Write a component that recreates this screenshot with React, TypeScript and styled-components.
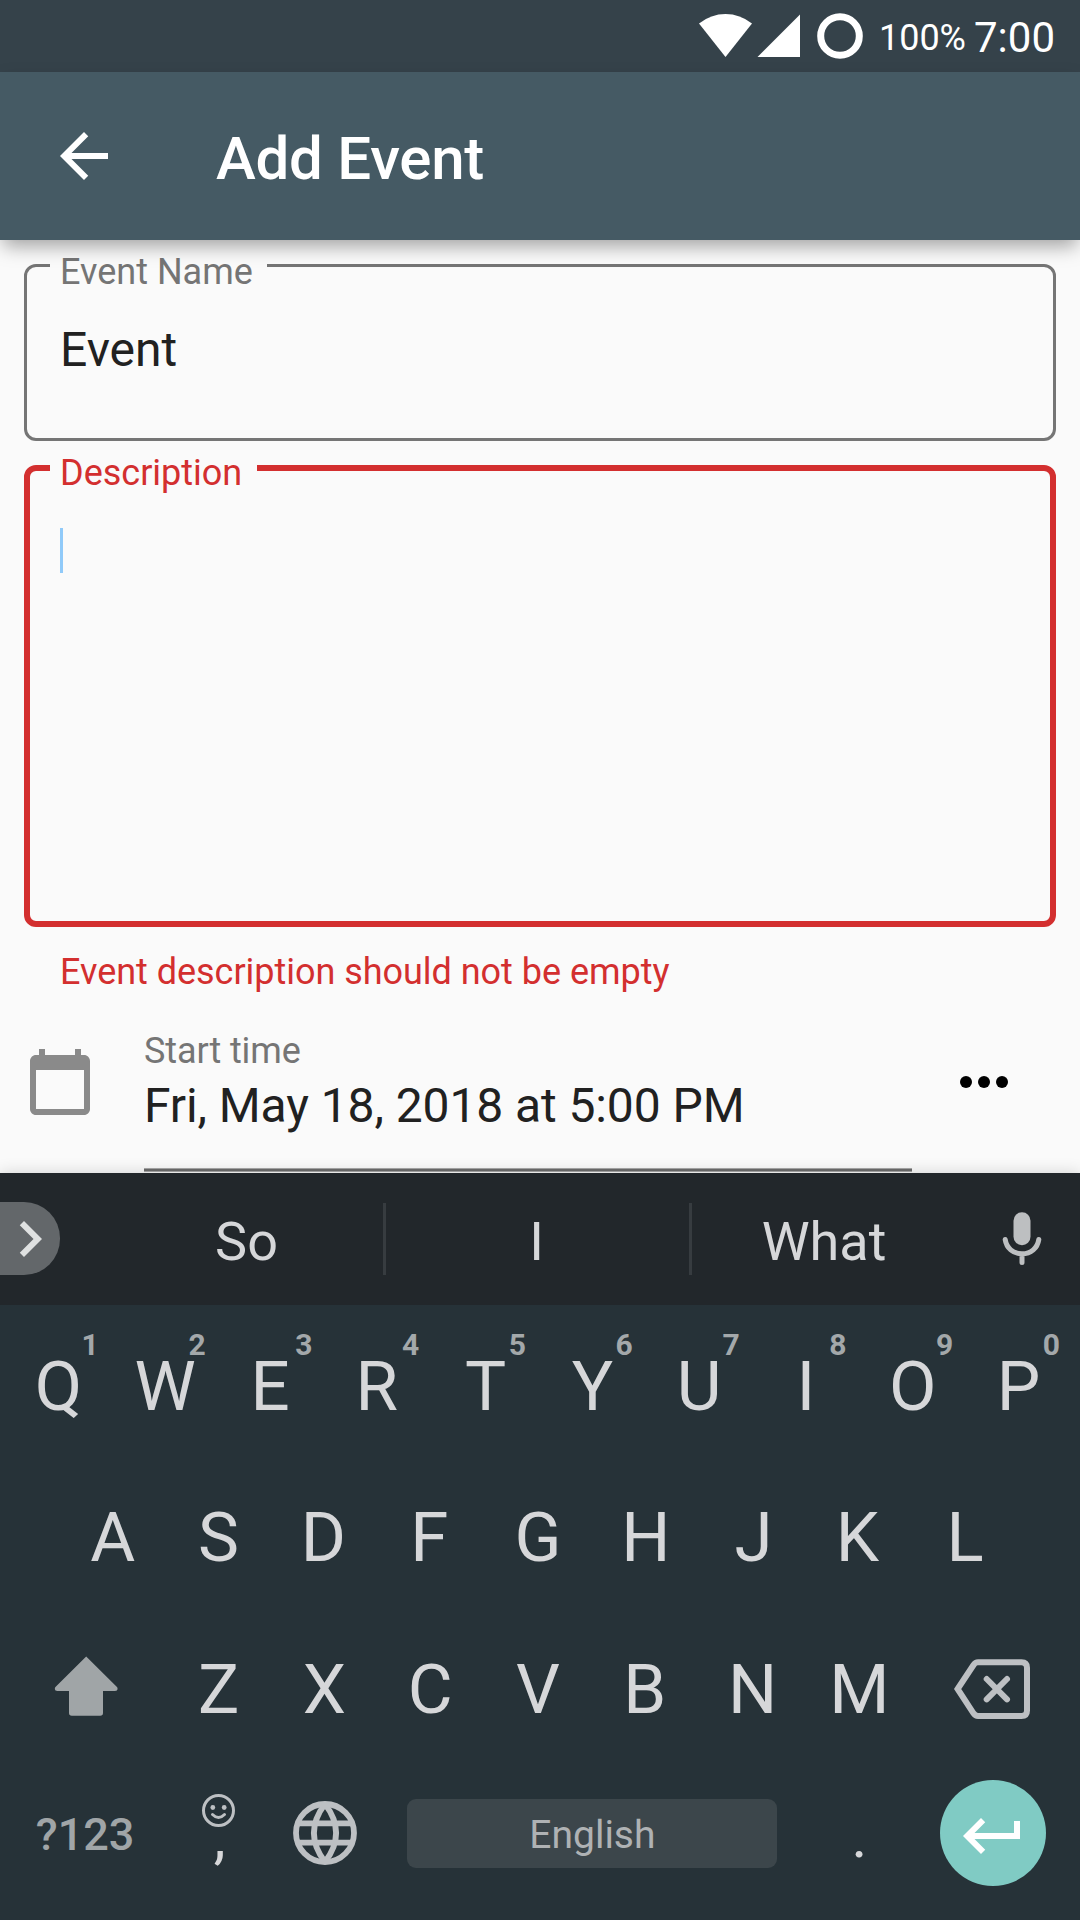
import React from "react";
import styled, { createGlobalStyle } from "styled-components";

const GlobalStyle = createGlobalStyle`
  * { box-sizing: border-box; }
  body {
    margin: 0;
    background: #fafafa;
    font-family: Roboto, "Noto Sans", sans-serif;
  }
`;

const Screen = styled.div`
  width: 1080px;
  height: 1920px;
  display: flex;
  flex-direction: column;
  overflow: hidden;
  background: #fafafa;
`;

/* ---------- Status bar and toolbar ---------- */

const StatusBar = styled.header`
  height: 72px;
  flex: none;
  display: flex;
  align-items: center;
  justify-content: flex-end;
  padding-right: 25px;
  background: #35424a;
  color: #fff;
`;

const StatusIcons = styled.svg`
  display: block;
  width: 170px;
  height: 72px;
  margin-right: 14px;
`;

const Battery = styled.span`
  font-size: 36px;
  line-height: 72px;
  padding-top: 3px;
  margin-right: 8px;
`;

const Clock = styled.span`
  font-size: 42px;
  line-height: 72px;
  padding-top: 3px;
`;

const Toolbar = styled.div`
  height: 168px;
  flex: none;
  display: flex;
  align-items: center;
  padding-left: 48px;
  background: #455a64;
  color: #fff;
  box-shadow: 0 9px 18px -3px rgba(0, 0, 0, 0.36);
  z-index: 1;
`;

const Title = styled.h1`
  margin: 0 0 0 96px;
  padding-top: 6px;
  font-size: 60px;
  font-weight: 500;
  line-height: 70px;
  letter-spacing: -0.25px;
`;

const Icon = styled.svg<{ $size?: number; $color?: string }>`
  display: block;
  flex: none;
  width: ${(p) => p.$size ?? 72}px;
  height: ${(p) => p.$size ?? 72}px;
  fill: ${(p) => p.$color ?? "#fff"};
`;

/* ---------- Form ---------- */

const Form = styled.main`
  height: 933px;
  flex: none;
  display: flex;
  flex-direction: column;
  padding: 24px 24px 0;
  overflow: hidden;
`;

const Field = styled.div<{ $height: number; $line: number; $color: string }>`
  position: relative;
  flex: none;
  height: ${(p) => p.$height}px;
  margin-bottom: 24px;
  padding: ${(p) => 63 - p.$line}px ${(p) => 36 - p.$line}px;
  border: ${(p) => p.$line}px solid ${(p) => p.$color};
  border-radius: 12px;
  color: #212121;
  font-size: 48px;
  line-height: 45px;
`;

const FieldLabel = styled.label<{ $line: number; $width: number; $color: string }>`
  position: absolute;
  top: -${(p) => p.$line}px;
  left: ${(p) => 26 - p.$line}px;
  width: ${(p) => p.$width}px;
  height: ${(p) => p.$line}px;
  padding-left: 10px;
  background: #fafafa;
  color: ${(p) => p.$color};
  font-size: 36px;
  line-height: 16px;
  white-space: nowrap;
`;

const FieldValue = styled.div`
  line-height: 45px;
`;

const Caret = styled.div`
  width: 3px;
  height: 45px;
  background: #90caf9;
`;

const FieldError = styled.p`
  flex: none;
  margin: 0 0 0 36px;
  height: 79px;
  color: #d32f2f;
  font-size: 36px;
  line-height: 42px;
  letter-spacing: -0.03px;
`;

const TimeRow = styled.div`
  flex: none;
  display: flex;
  align-items: flex-start;
`;

const CalendarSlot = styled.div`
  width: 120px;
  padding-top: 16px;
`;

const TimeField = styled.div`
  width: 768px;
  height: 142px;
  background: linear-gradient(#a8a8a8 0 1px, #6c6c6c 1px 3px, #a8a8a8 3px 4px) bottom / 100% 4px no-repeat;
`;

const TimeLabel = styled.div`
  font-size: 36px;
  line-height: 42px;
  letter-spacing: -0.1px;
  color: #757575;
`;

const TimeValue = styled.div`
  margin-top: 6px;
  font-size: 48px;
  line-height: 56px;
  letter-spacing: -0.09px;
  color: #212121;
`;

const MoreSlot = styled.div`
  padding: 16px 0 0 36px;
`;

/* ---------- Keyboard ---------- */

const Keyboard = styled.section`
  height: 747px;
  flex: none;
  background: #263238;
  color: #d6d7d9;
  box-shadow: 0 0 15px rgba(0, 0, 0, 0.16);
  z-index: 1;
`;

const Suggestions = styled.div`
  height: 132px;
  display: flex;
  align-items: center;
  background: #22272b;
`;

const Expand = styled.div`
  width: 60px;
  height: 73px;
  margin: -1px 48px 0 0;
  display: flex;
  align-items: center;
  justify-content: flex-end;
  overflow: hidden;
  border-radius: 0 36px 36px 0;
  background: #63676a;
`;

const ExpandIcon = styled(Icon)`
  margin-right: -6px;
`;

const Suggestion = styled.div<{ $width: number; $divided?: boolean; $inset?: string }>`
  width: ${(p) => p.$width}px;
  height: 72px;
  border-right: ${(p) => (p.$divided ? "3px solid #373c40" : "none")};
  padding: ${(p) => p.$inset ?? "6px 2px 0 0"};
  font-size: 54px;
  line-height: 66px;
  text-align: center;
`;

const MicIcon = styled.svg`
  display: block;
  width: 40px;
  height: 54px;
  margin-left: 43.5px;
`;

const Keys = styled.div`
  display: flex;
  flex-direction: column;
  padding: 6px 2px 0 0;
`;

const KeyRow = styled.div<{ $height: number }>`
  height: ${(p) => p.$height}px;
  display: flex;
  justify-content: center;
  align-items: stretch;
`;

const Key = styled.div<{ $width?: number }>`
  position: relative;
  width: ${(p) => p.$width ?? 106.8}px;
  display: flex;
  align-items: center;
  justify-content: center;
  font-size: 69px;
  line-height: 81px;
`;

const Letter = styled.span<{ $nudge: number }>`
  margin-left: ${(p) => -2 * p.$nudge}px;
`;

const Hint = styled.span`
  position: absolute;
  top: 16px;
  right: 13px;
  font-size: 30px;
  font-weight: 700;
  line-height: 36px;
  color: #a3a8aa;
`;

const SymbolsLabel = styled.span`
  padding-top: 4px;
  color: #a0a5a7;
  font-size: 45px;
  font-weight: 500;
  line-height: 54px;
`;

const CommaStack = styled.div`
  display: flex;
  flex-direction: column;
  align-items: center;
  height: 136px;
  padding-top: 29px;
`;

const Comma = styled.span`
  margin: -31px 0 0 2px;
  font-size: 60px;
`;

const Period = styled.span`
  padding-top: 6px;
  font-size: 60px;
`;

const SpaceBar = styled.div`
  width: 370px;
  height: 69px;
  display: flex;
  align-items: center;
  justify-content: center;
  padding-top: 3px;
  border-radius: 9px;
  background: #3c464b;
  color: #afb2b4;
  font-size: 39px;
  line-height: 46px;
`;

const Enter = styled.div`
  width: 106px;
  height: 106px;
  display: flex;
  align-items: center;
  justify-content: center;
  padding-top: 6px;
  border-radius: 50%;
  background: #80cbc4;
`;

const Drawing = styled.svg<{ $w: number; $h: number }>`
  display: block;
  flex: none;
  width: ${(p) => p.$w}px;
  height: ${(p) => p.$h}px;
`;

const BackspaceSlot = styled.div`
  margin-right: 2px;
`;

const topRow = "QWERTYUIOP".split("");
const homeRow = "ASDFGHJKL".split("");
const bottomRow = "ZXCVBNM".split("");

const opticalShift: Record<string, number> = {
  E: 2, R: 2, D: 2, F: 3, P: 1, K: 2, C: 2, L: 1, G: 1, V: 1, B: 1, X: 1, A: -1, J: -1,
};

function LetterCap({ letter }: { letter: string }) {
  return <Letter $nudge={opticalShift[letter] ?? 0}>{letter}</Letter>;
}

function StatusGlyphs() {
  return (
    <StatusIcons viewBox="695 0 170 72" fill="#fff">
      <path d="M725.5 57 699 23.5Q711 14 725.5 14T752 23.5Z" />
      <path d="M757.5 57H800V14.5Z" />
      <circle cx="840" cy="36" r="19.3" fill="none" stroke="#fff" strokeWidth="7" />
    </StatusIcons>
  );
}

function ShiftIcon() {
  return (
    <Drawing $w={66} $h={66} viewBox="52 1656 66 66" fill="#a0a5a7">
      <path d="M86.2 1656.5 117.2 1687.3Q118.6 1691 115 1691H103V1713Q103 1715.8 100.2 1715.8H71.8Q69 1715.8 69 1713V1691H57.4Q53.8 1691 55.2 1687.3Z" />
    </Drawing>
  );
}

function BackspaceIcon() {
  return (
    <Drawing $w={76} $h={60} viewBox="954 1659 76 60" fill="none" stroke="#bdc0c3" strokeWidth="6">
      <path d="M957.6 1689 973.5 1665Q975.4 1662.3 978 1662.3H1021.5Q1027 1662.3 1027 1667.8V1710.5Q1027 1716 1021.5 1716H978Q975.4 1716 973.5 1713.3Z" />
      <path d="M986.7 1679 1007 1699.3M1007 1679 986.7 1699.3" strokeLinecap="round" />
    </Drawing>
  );
}

function SmileIcon() {
  return (
    <Drawing $w={33} $h={33} viewBox="0 0 33 33" fill="none" stroke="#bdc0c3" strokeWidth="3">
      <circle cx="16.5" cy="16.5" r="15" />
      <path d="M10.5 20.5Q16.5 26.5 22.5 20.5" strokeLinecap="round" />
      <circle cx="10.8" cy="13.5" r="2.4" fill="#bdc0c3" stroke="none" />
      <circle cx="22.2" cy="13.5" r="2.4" fill="#bdc0c3" stroke="none" />
    </Drawing>
  );
}

function GlobeIcon() {
  return (
    <Drawing $w={64} $h={64} viewBox="0 0 64 64" fill="none" stroke="#bdc0c3" strokeWidth="5.8">
      <circle cx="32" cy="32" r="29" />
      <path d="M5 22.3H59M5 41.7H59M32 3Q9.8 32 32 61M32 3Q54.2 32 32 61" />
    </Drawing>
  );
}

export default function App() {
  return (
    <>
      <GlobalStyle />
      <Screen>
        <StatusBar>
          <StatusGlyphs />
          <Battery>100%</Battery>
          <Clock>7:00</Clock>
        </StatusBar>
        <Toolbar>
          <Icon viewBox="0 0 24 24">
            <path d="M20 11H7.83l5.59-5.59L12 4l-8 8 8 8 1.41-1.41L7.83 13H20v-2z" />
          </Icon>
          <Title>Add Event</Title>
        </Toolbar>

        <Form>
          <Field $height={177} $line={3} $color="#757575">
            <FieldLabel $line={3} $width={217} $color="#757575">Event Name</FieldLabel>
            <FieldValue>Event</FieldValue>
          </Field>
          <Field $height={462} $line={6} $color="#d32f2f">
            <FieldLabel $line={6} $width={207} $color="#d32f2f">Description</FieldLabel>
            <Caret />
          </Field>
          <FieldError>Event description should not be empty</FieldError>
          <TimeRow>
            <CalendarSlot>
              <Icon viewBox="0 0 24 24" $color="#8a8a8a">
                <path d="M20 3h-1V1h-2v2H7V1H5v2H4c-1.1 0-2 .9-2 2v16c0 1.1.9 2 2 2h16c1.1 0 2-.9 2-2V5c0-1.1-.9-2-2-2zm0 18H4V8h16v13z" />
              </Icon>
            </CalendarSlot>
            <TimeField>
              <TimeLabel>Start time</TimeLabel>
              <TimeValue>Fri, May 18, 2018 at 5:00 PM</TimeValue>
            </TimeField>
            <MoreSlot>
              <Icon viewBox="0 0 24 24" $color="#000">
                <circle cx="6" cy="12" r="2" />
                <circle cx="12" cy="12" r="2" />
                <circle cx="18" cy="12" r="2" />
              </Icon>
            </MoreSlot>
          </TimeRow>
        </Form>

        <Keyboard>
          <Suggestions>
            <Expand>
              <ExpandIcon viewBox="0 0 24 24" $color="#dfe1e1">
                <path d="M10 6 8.59 7.41 13.17 12l-4.58 4.59L10 18l6-6z" />
              </ExpandIcon>
            </Expand>
            <Suggestion $width={278} $divided $inset="6px 0 0 2px">So</Suggestion>
            <Suggestion $width={306} $divided>I</Suggestion>
            <Suggestion $width={266}>What</Suggestion>
            <MicIcon viewBox="0 0 40 54">
              <rect x="11.5" y="0.3" width="17" height="33" rx="8.5" fill="#bdbfc1" />
              <path d="M3.2 27.5C4.5 36 11 41.8 20 41.8S35.5 36 36.8 27.5M20 42V50.5" fill="none" stroke="#bdbfc1" strokeWidth="5" strokeLinecap="round" />
            </MicIcon>
          </Suggestions>
          <Keys>
            <KeyRow $height={151}>
              {topRow.map((letter, i) => (
                <Key key={letter}>
                  <LetterCap letter={letter} />
                  <Hint>{(i + 1) % 10}</Hint>
                </Key>
              ))}
            </KeyRow>
            <KeyRow $height={151}>
              {homeRow.map((letter) => (
                <Key key={letter}>
                  <LetterCap letter={letter} />
                </Key>
              ))}
            </KeyRow>
            <KeyRow $height={152}>
              <Key $width={160.2}>
                <ShiftIcon />
              </Key>
              {bottomRow.map((letter) => (
                <Key key={letter}>
                  <LetterCap letter={letter} />
                </Key>
              ))}
              <Key $width={160.2}>
                <BackspaceSlot>
                  <BackspaceIcon />
                </BackspaceSlot>
              </Key>
            </KeyRow>
            <KeyRow $height={136}>
              <Key $width={160.2}>
                <SymbolsLabel>?123</SymbolsLabel>
              </Key>
              <Key>
                <CommaStack>
                  <SmileIcon />
                  <Comma>,</Comma>
                </CommaStack>
              </Key>
              <Key>
                <GlobeIcon />
              </Key>
              <Key $width={427.2}>
                <SpaceBar>English</SpaceBar>
              </Key>
              <Key>
                <Period>.</Period>
              </Key>
              <Key $width={160.2}>
                <Enter>
                  <Icon viewBox="0 0 24 24">
                    <path d="M19 7v4H5.83l3.58-3.59L8 6l-6 6 6 6 1.41-1.41L5.83 13H21V7z" />
                  </Icon>
                </Enter>
              </Key>
            </KeyRow>
          </Keys>
        </Keyboard>
      </Screen>
    </>
  );
}
